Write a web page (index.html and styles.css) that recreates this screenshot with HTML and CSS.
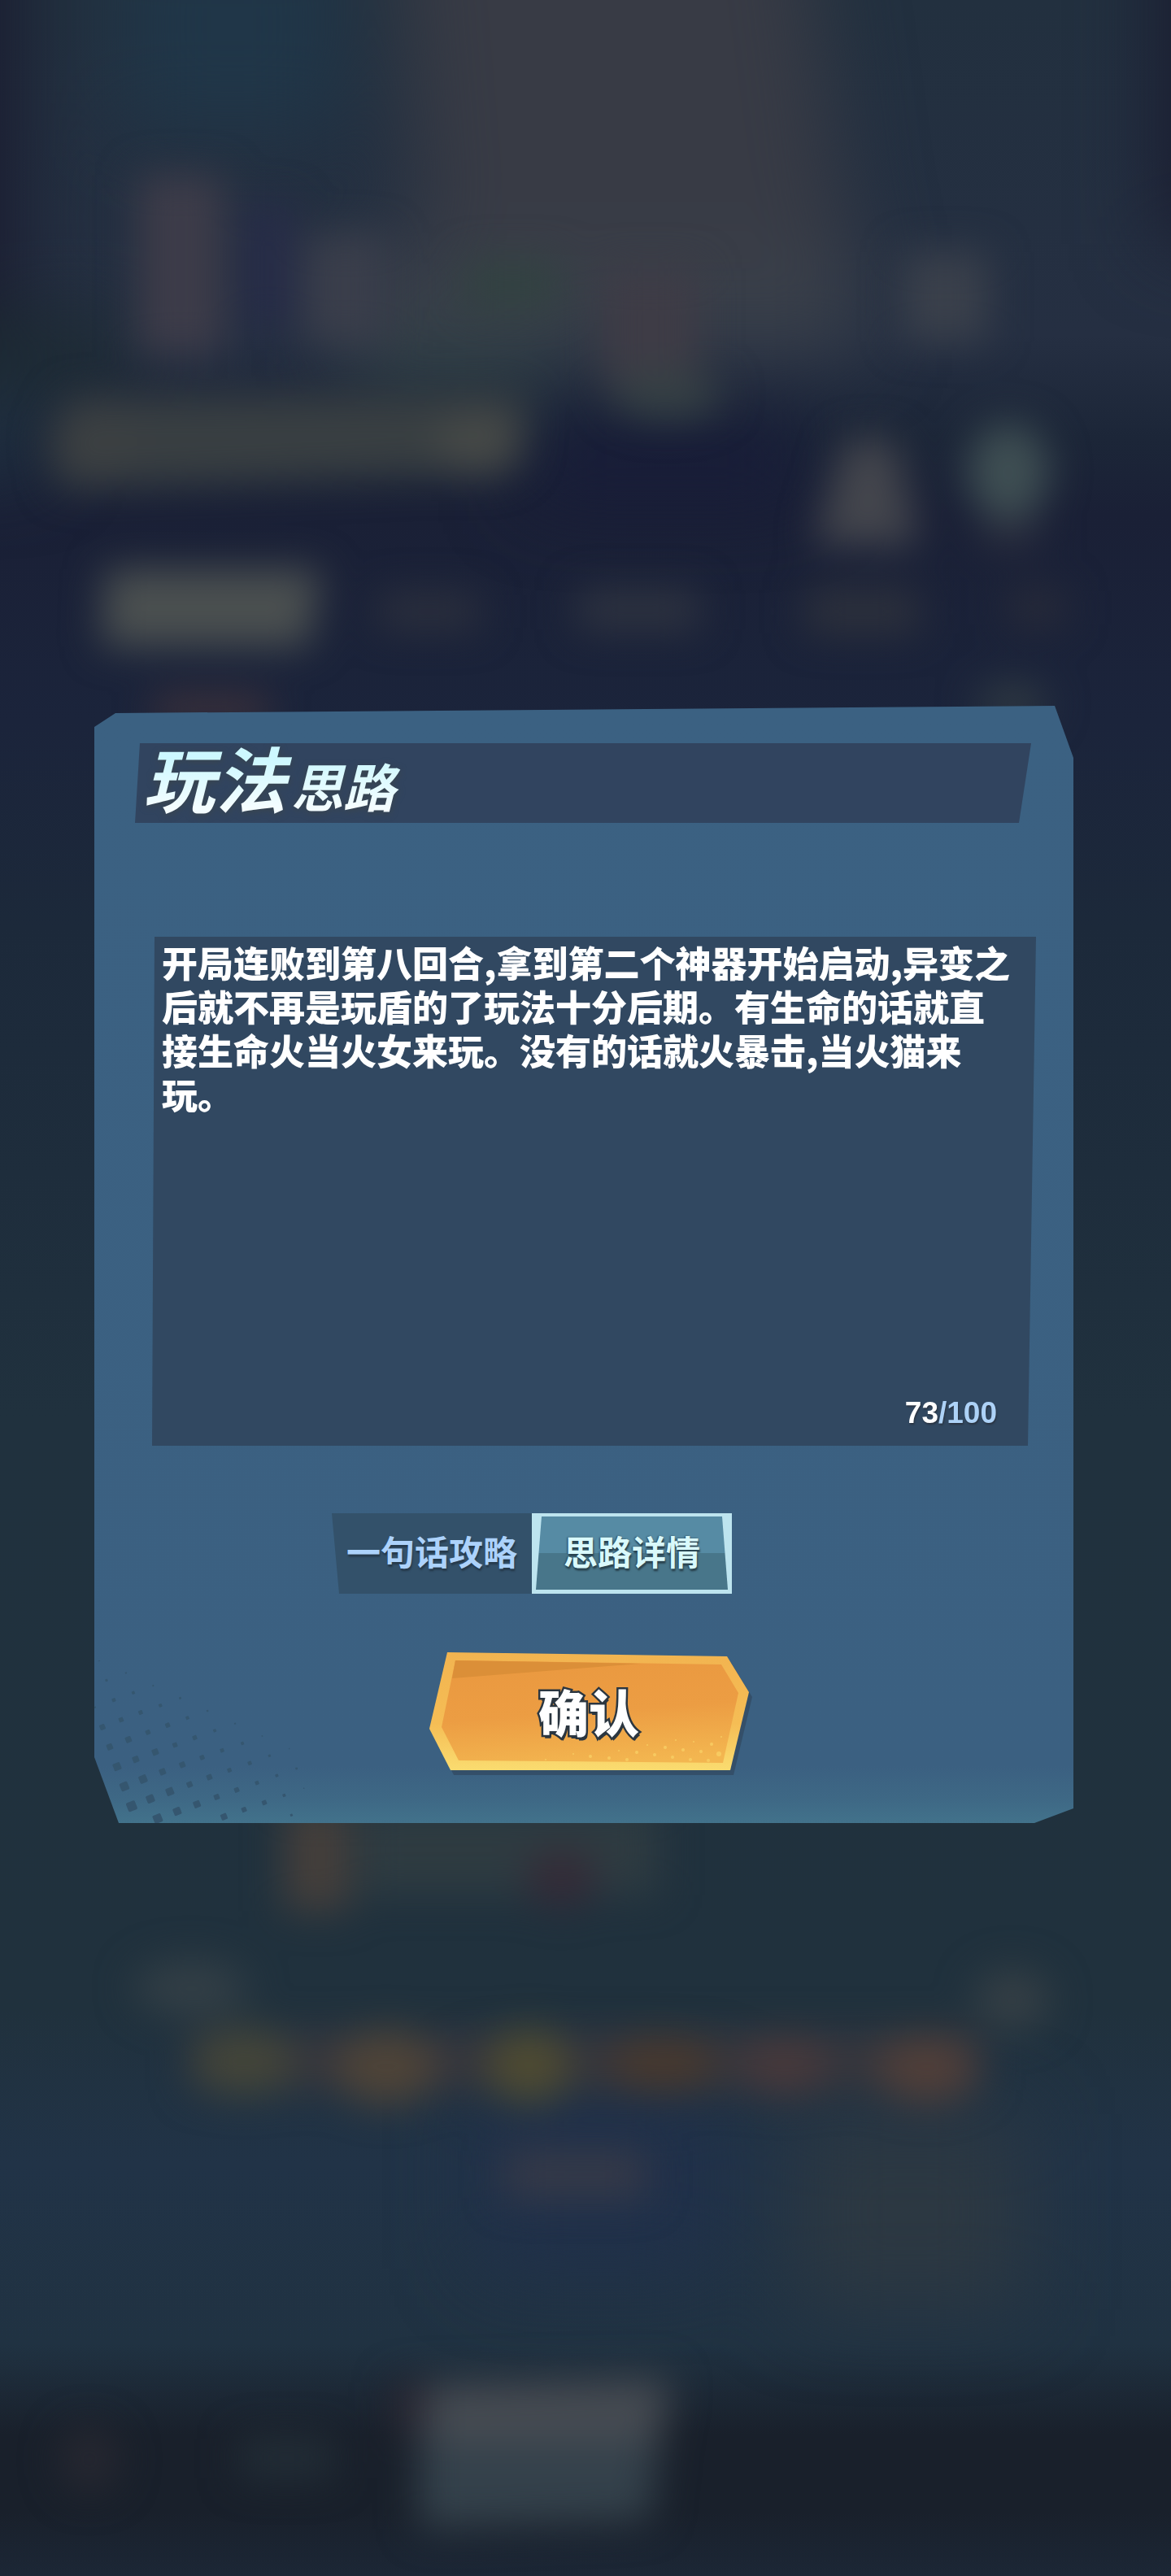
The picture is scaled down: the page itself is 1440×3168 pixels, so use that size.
FILE: index.html
```html
<!DOCTYPE html>
<html lang="zh-CN">
<head>
    <meta charset="UTF-8">
    <meta name="viewport" content="width=device-width, initial-scale=1.0">
    <title>玩法思路</title>
    <link rel="stylesheet" href="styles.css">
</head>
<body>
    <!-- blurred lobby behind the dialog -->
    <svg class="backdrop" viewBox="0 0 1440 3168" preserveAspectRatio="none" aria-hidden="true">
        <defs>
            <filter id="soft" filterUnits="userSpaceOnUse" x="-200" y="-200" width="1840" height="3568" color-interpolation-filters="sRGB"><feGaussianBlur stdDeviation="24"/></filter>
            <filter id="wide" filterUnits="userSpaceOnUse" x="-200" y="-200" width="1840" height="3568" color-interpolation-filters="sRGB"><feGaussianBlur stdDeviation="50"/></filter>
            <linearGradient id="sky" x1="0" y1="0" x2="0" y2="1">
                <stop offset="0" stop-color="#22303f"/>
                <stop offset="0.13" stop-color="#252f42"/>
                <stop offset="0.17" stop-color="#1c2638"/>
                <stop offset="0.2" stop-color="#1a2036"/>
                <stop offset="0.28" stop-color="#1b243b"/>
                <stop offset="0.36" stop-color="#1c293a"/>
                <stop offset="0.55" stop-color="#20313e"/>
                <stop offset="0.78" stop-color="#20313d"/>
                <stop offset="0.84" stop-color="#213347"/>
                <stop offset="0.91" stop-color="#203242"/>
                <stop offset="0.945" stop-color="#19202b"/>
                <stop offset="0.975" stop-color="#19202b"/>
                <stop offset="1" stop-color="#1c2736"/>
            </linearGradient>
        </defs>
        <rect width="1440" height="3168" fill="url(#sky)"/>
        <g filter="url(#wide)">
            <rect x="-150" y="-150" width="170" height="560" fill="#1a1c30"/>
            <rect x="1425" y="-150" width="150" height="450" fill="#1a1c30"/>
            <path d="M480 -150H980L1060 430H530Z" fill="#383b45"/>
            <rect x="150" y="-100" width="270" height="260" fill="#203648"/>
            <rect x="420" y="310" width="640" height="120" fill="#3a404a"/>
            <rect x="-100" y="395" width="260" height="80" fill="#1b2a30"/>
            <rect x="440" y="425" width="240" height="60" fill="#2a3e42"/>
            <rect x="-100" y="500" width="150" height="70" fill="#203244"/>
            <rect x="650" y="520" width="340" height="90" fill="#171a38"/>
            <rect x="980" y="2600" width="280" height="240" fill="#2c3842"/>
            <rect x="590" y="2570" width="290" height="220" fill="#20304a"/>
        </g>
        <g filter="url(#soft)">
            <rect x="170" y="215" width="105" height="220" fill="#3d3c49"/>
            <rect x="300" y="250" width="60" height="150" fill="#272c48"/>
            <rect x="375" y="290" width="100" height="130" fill="#3a3e4b"/>
            <rect x="570" y="320" width="120" height="60" fill="#324241"/>
            <rect x="740" y="330" width="120" height="140" fill="#3e3c46"/>
            <rect x="1110" y="310" width="105" height="110" fill="#3a404b"/>
            <ellipse cx="820" cy="485" rx="70" ry="30" fill="#354044"/>
            <path d="M80 490 650 485 625 580 70 600Z" fill="#393f42"/>
            <ellipse cx="115" cy="545" rx="55" ry="45" fill="#3c4042"/>
            <ellipse cx="590" cy="545" rx="55" ry="40" fill="#464947"/>
            <path d="M1040 540 1100 540 1130 670 1000 670Z" fill="#44464d"/>
            <ellipse cx="1240" cy="580" rx="50" ry="60" fill="#3f4f53"/>
            <rect x="1205" y="640" width="75" height="35" fill="#292c3d"/>
            <path d="M130 700 395 700 380 795 125 795Z" fill="#4b5050"/>
            <rect x="465" y="730" width="125" height="44" fill="#2c303d"/>
            <rect x="710" y="725" width="150" height="50" fill="#2e3340"/>
            <rect x="990" y="725" width="140" height="54" fill="#2d313c"/>
            <rect x="1240" y="725" width="70" height="45" fill="#282b39"/>
            <rect x="190" y="858" width="140" height="30" fill="#46353a"/>
            <ellipse cx="1245" cy="865" rx="45" ry="25" fill="#303a42"/>
            <rect x="350" y="2220" width="80" height="130" fill="#453f3b"/>
            <rect x="440" y="2220" width="370" height="110" fill="#2e3b41"/>
            <ellipse cx="690" cy="2310" rx="44" ry="34" fill="#352b37"/>
            <ellipse cx="235" cy="2445" rx="70" ry="34" fill="#333f46"/>
            <ellipse cx="1245" cy="2460" rx="46" ry="38" fill="#353f45"/>
            <rect x="235" y="2500" width="970" height="70" fill="#35363d"/>
            <ellipse cx="300" cy="2535" rx="64" ry="42" fill="#444539"/>
            <ellipse cx="475" cy="2542" rx="64" ry="46" fill="#4f4438"/>
            <ellipse cx="650" cy="2540" rx="52" ry="46" fill="#4f4b32"/>
            <ellipse cx="815" cy="2538" rx="68" ry="34" fill="#49392e"/>
            <ellipse cx="965" cy="2540" rx="55" ry="38" fill="#48393b"/>
            <ellipse cx="1140" cy="2544" rx="62" ry="42" fill="#513f39"/>
            <rect x="620" y="2645" width="175" height="58" fill="#363a48"/>
            <path d="M515 2930 820 2920 800 3100 515 3110Z" fill="#34414b"/>
            <path d="M530 2935 825 2930 810 3005 530 3005Z" fill="#464b52"/>
            <rect x="485" y="2930" width="35" height="60" fill="#2b2530"/>
            <ellipse cx="110" cy="3025" rx="36" ry="40" fill="#272831"/>
            <rect x="295" y="2998" width="115" height="50" fill="#232e37"/>
        </g>
    </svg>

    <main class="page">
        <section class="dialog">
            <svg class="dots" viewBox="0 0 820 600" aria-hidden="true" id="dots"></svg>

            <h1 class="title"><span class="title-text">玩法<small>思路</small></span></h1>

            <div class="editor">
                <textarea id="strategy" aria-label="思路详情" maxlength="100" spellcheck="false">开局连败到第八回合,拿到第二个神器开始启动,异变之后就不再是玩盾的了玩法十分后期。有生命的话就直接生命火当火女来玩。没有的话就火暴击,当火猫来玩。</textarea>
                <p class="counter">73<span>/100</span></p>
            </div>

            <div class="tabs">
                <button type="button" class="tab">一句话攻略</button>
                <button type="button" class="tab active">思路详情</button>
            </div>

            <button type="button" class="confirm">
                <svg class="confirm-bg" viewBox="0 0 393 145" aria-hidden="true">
                    <defs>
                        <linearGradient id="rim" x1="0" y1="0" x2="0" y2="1">
                            <stop offset="0" stop-color="#f2b450"/>
                            <stop offset="0.6" stop-color="#f5bd55"/>
                            <stop offset="1" stop-color="#fadc70"/>
                        </linearGradient>
                        <linearGradient id="face" x1="0.4" y1="0" x2="0.6" y2="1">
                            <stop offset="0" stop-color="#ea9940"/>
                            <stop offset="0.5" stop-color="#ec9d43"/>
                            <stop offset="1" stop-color="#f3b650"/>
                        </linearGradient>
                    </defs>
                    <path d="M22 0 366 5 393 49 370 145 26 145 0 94Z" fill="#344f69" transform="translate(4 6)"/>
                    <path d="M22 0 366 5 393 49 370 145 26 145 0 94Z" fill="url(#rim)"/>
                    <path d="M32 10 359 15 380 50 361 136 36 133 15 92Z" fill="url(#face)"/>
                    <path d="M32 10 260 14 28 32Z" fill="#db8f38"/>
                    <g fill="#f9d065" opacity="0.8">
                        <circle cx="143" cy="132" r="1"/><circle cx="177" cy="125" r="1"/><circle cx="198" cy="128" r="2"/>
                        <circle cx="221" cy="130" r="2"/><circle cx="243" cy="132" r="2"/><circle cx="233" cy="121" r="1"/>
                        <circle cx="255" cy="123" r="2"/><circle cx="277" cy="126" r="2"/><circle cx="299" cy="129" r="2"/>
                        <circle cx="321" cy="132" r="2"/><circle cx="268" cy="114" r="1"/><circle cx="290" cy="117" r="2"/>
                        <circle cx="312" cy="120" r="2"/><circle cx="334" cy="122" r="2"/><circle cx="356" cy="125" r="3"/>
                        <circle cx="303" cy="108" r="1"/><circle cx="325" cy="110" r="1"/><circle cx="347" cy="113" r="2"/>
                        <circle cx="343" cy="133" r="2"/><circle cx="359" cy="104" r="1"/>
                    </g>
                </svg>
                <span>确认</span>
            </button>
        </section>
    </main>

    <script>
        // halftone corner: x, y of the first dot in each column, then the dot sizes going down
        const columns = [
            [3, 173, [6, 20, 22, 28, 31, 35]],
            [18, 0, [6, 9, 13, 17, 22, 23, 29, 29, 32]],
            [117, 46, [6, 11, 15, 17, 23, 23, 28, 28]],
            [217, 93, [6, 12, 17, 17, 21, 21, 25]],
            [317, 139, [8, 12, 16, 17, 20, 20, 23]],
            [418, 186, [7, 11, 14, 15, 18, 18]],
            [520, 233, [6, 11, 14, 14, 17]],
            [620, 279, [5, 9, 11, 11, 9]],
            [720, 326, [4, 8, 4]]
        ];
        let rects = '';
        columns.forEach(([x, y, sizes]) => {
            sizes.forEach((s, i) => {
                const cx = x + i * 27;
                const cy = y + i * 73;
                rects += `<rect x="${cx - s / 2}" y="${cy - s / 2}" width="${s}" height="${s}" rx="${s / 6}" transform="rotate(-22 ${cx} ${cy})"/>`;
            });
        });
        document.getElementById('dots').innerHTML = rects;
    </script>
</body>
</html>
```
FILE: styles.css
```css
* {
    box-sizing: border-box;
}
body {
    margin: 0;
    background: #1c2638;
    color: #fff;
    font-family: "Noto Sans CJK SC", sans-serif;
}
.backdrop {
    position: fixed;
    top: 0;
    left: 0;
    width: 100%;
    height: 100%;
}
.page {
    position: relative;
    min-height: 100vh;
    display: flex;
    align-items: center;
    padding: 0 120px 58px 116px;
}

/* dialog */
.dialog {
    position: relative;
    width: 100%;
    display: flex;
    flex-direction: column;
    padding: 46px 46px 65px 50px;
    background: linear-gradient(to bottom, #3b6182, #3b6081 calc(100% - 70px), #3e6885 calc(100% - 30px), #42728b);
    clip-path: polygon(0 26px, 26px 9px, calc(100% - 23px) 0, 100% 64px, 100% calc(100% - 18px), calc(100% - 48px) 100%, 30px 100%, 0 calc(100% - 81px));
}
.dots {
    position: absolute;
    left: 0;
    bottom: 0;
    width: 273px;
    height: 200px;
    fill: #35566f;
}
.title {
    margin: 0 6px 0 0;
    height: 98px;
    padding: 0 0 6px 10px;
    display: flex;
    align-items: center;
    background: #31445f;
    clip-path: polygon(6px 0, 100% 0, calc(100% - 15px) 100%, 0 100%);
}
.title-text {
    padding-right: 24px;
    font-size: 88px;
    line-height: 98px;
    font-weight: 700;
    font-style: italic;
    background: linear-gradient(to bottom, #cdf8ff 25%, #f4fdff 80%);
    -webkit-background-clip: text;
    background-clip: text;
    color: transparent;
    filter: drop-shadow(0 2px 4px #3a454c);
}
.title-text small {
    margin-left: 6px;
    font-size: 64px;
}

/* text box */
.editor {
    position: relative;
    margin: 140px 0 0 21px;
}
.editor textarea {
    display: block;
    width: 100%;
    height: 626px;
    padding: 4px 24px 0 12px;
    border: none;
    outline: none;
    resize: none;
    overflow: hidden;
    background: #314861;
    clip-path: polygon(3px 0, 100% 0, calc(100% - 10px) 100%, 0 100%);
    color: #fff;
    font-family: inherit;
    font-size: 44px;
    font-weight: 900;
    line-height: 54px;
}
.counter {
    position: absolute;
    right: 48px;
    bottom: 18px;
    margin: 0;
    font-family: "Liberation Sans", Arial, sans-serif;
    font-size: 37px;
    font-weight: 700;
    line-height: 44px;
    text-shadow: 1px 2px 2px #2a3442;
}
.counter span {
    color: #add2f7;
}

/* tabs */
.tabs {
    display: grid;
    grid-template-columns: 1fr 1fr;
    width: 492px;
    margin: 83px 0 0 242px;
}
.tab {
    height: 99px;
    padding: 0 0 8px;
    border: none;
    background: #33516a;
    color: #acd2fb;
    font-family: inherit;
    font-size: 42px;
    font-weight: 700;
    white-space: nowrap;
    text-shadow: 1px 3px 2px #263a4c;
    cursor: pointer;
    clip-path: polygon(0 0, 100% 0, 100% 100%, 9px 100%);
}
.tab.active {
    position: relative;
    z-index: 0;
    background: #bde4ef;
    color: #d9f9fb;
    text-shadow: 1px 3px 2px #29424e, -1px 0 2px #29424e;
    clip-path: none;
}
.tab.active::before {
    content: "";
    position: absolute;
    z-index: -1;
    inset: 4px 5px 5px 5px;
    background: linear-gradient(to bottom, #568ba4 50%, #48768a 50%);
    clip-path: polygon(7px 0, calc(100% - 7px) 0, 100% 100%, 0 100%);
}

/* confirm */
.confirm {
    position: relative;
    align-self: center;
    width: 393px;
    height: 145px;
    margin: 72px 0 0 8px;
    padding: 0;
    border: none;
    background: none;
    color: #fff;
    font-family: inherit;
    font-size: 62px;
    font-weight: 900;
    line-height: 145px;
    cursor: pointer;
}
.confirm span {
    position: relative;
    -webkit-text-stroke: 5px #2b3640;
    paint-order: stroke fill;
    text-shadow: 2px 4px 0 #2b3640;
}
.confirm-bg {
    position: absolute;
    top: 0;
    left: 0;
    width: 100%;
    height: 100%;
    overflow: visible;
}
```
